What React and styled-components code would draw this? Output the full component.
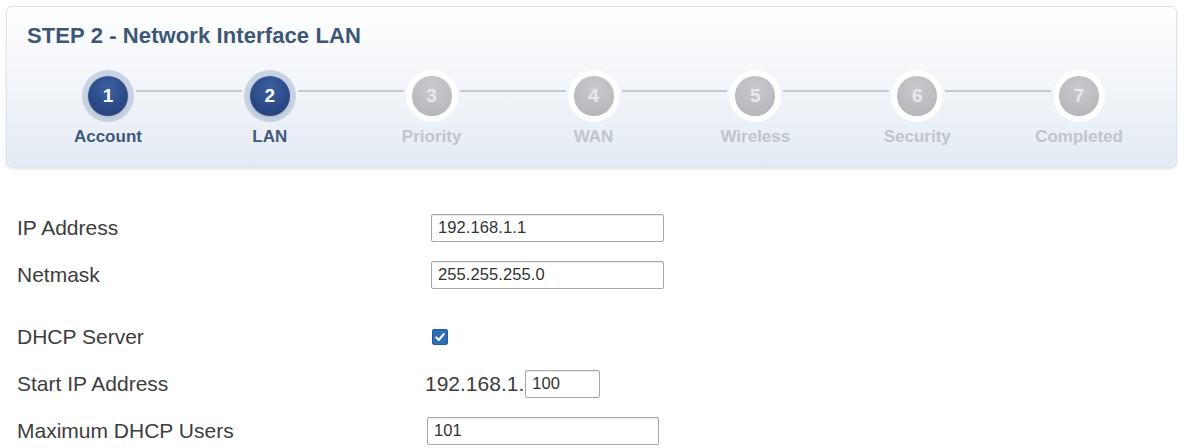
import React from 'react';
import styled, { createGlobalStyle } from 'styled-components';

const GlobalStyle = createGlobalStyle`
  html, body {
    margin: 0;
    padding: 0;
    background: #ffffff;
  }
  body {
    font-family: "Liberation Sans", Arial, sans-serif;
    color: #333333;
  }
`;

const Page = styled.div`
  width: 1184px;
  height: 448px;
  overflow: hidden;
  padding: 6px 7px 0 6px;
  box-sizing: border-box;
`;

const WizardPanel = styled.div`
  height: 162px;
  box-sizing: border-box;
  padding: 16px 12px 0 20px;
  border: 1px solid #e0e4e9;
  border-radius: 6px;
  background: linear-gradient(to bottom, #ffffff 0%, #f6f8fb 35%, #e4ebf4 100%);
  box-shadow: 0 1px 3px rgba(120, 135, 155, 0.25);
`;

const StepTitle = styled.h2`
  margin: 0;
  font-size: 22px;
  line-height: 26px;
  font-weight: bold;
  color: #3d5776;
  letter-spacing: 0.1px;
`;

const Steps = styled.div`
  display: grid;
  grid-template-columns: repeat(7, 1fr);
  margin-top: 21px;
  padding-right: 4px;
`;

const Step = styled.div`
  display: flex;
  flex-direction: column;
  align-items: center;
`;

const CircleRow = styled.div`
  display: flex;
  align-items: center;
  width: 100%;
  height: 52px;
`;

const Connector = styled.div`
  flex: 1;
  height: 2px;
  margin-bottom: 11px;
  background: ${(p) => (p.$hidden ? 'transparent' : '#c5cad0')};
`;

const Circle = styled.div`
  width: 40px;
  height: 40px;
  flex: none;
  border-radius: 50%;
  display: flex;
  align-items: center;
  justify-content: center;
  font-size: 19px;
  font-weight: bold;
  color: ${(p) => (p.$active ? '#ffffff' : '#e9e9e9')};
  background: ${(p) =>
    p.$active
      ? 'radial-gradient(circle at 50% 30%, #3c60a2 0%, #2a4986 60%, #223e75 100%)'
      : 'radial-gradient(circle at 50% 30%, #c8cacd 0%, #b9bbbe 65%, #afb2b5 100%)'};
  box-shadow: ${(p) =>
    p.$active
      ? '0 0 0 6px rgba(165, 183, 210, 0.55), 0 1px 3px rgba(0, 0, 0, 0.25)'
      : '0 0 0 6px rgba(255, 255, 255, 0.92), 0 1px 3px rgba(0, 0, 0, 0.12)'};
  margin: 0 8px;
`;

const StepLabel = styled.div`
  margin-top: 5px;
  font-size: 17px;
  line-height: 20px;
  font-weight: bold;
  color: ${(p) => (p.$active ? '#3f5a79' : '#c0c5cb')};
`;

const Form = styled.div`
  padding: 36px 0 0 11px;
`;

const Row = styled.div`
  display: grid;
  grid-template-columns: 414px 1fr;
  align-items: center;
  height: 47px;
  margin-top: ${(p) => (p.$gap ? '15px' : '0')};
`;

const FieldLabel = styled.div`
  font-size: 21px;
  color: #3d3d3d;
`;

const TextInput = styled.input`
  box-sizing: border-box;
  width: ${(p) => p.$width || '233px'};
  height: 28px;
  margin-left: ${(p) => p.$shift || '0'};
  padding: 0 6px;
  border: 1px solid #a8a8a8;
  border-radius: 2px;
  box-shadow: inset 0 1px 1px rgba(0, 0, 0, 0.08);
  font-family: "Liberation Sans", Arial, sans-serif;
  font-size: 16.5px;
  color: #333333;
  letter-spacing: 0.1px;
  background: #ffffff;
  outline: none;
`;

const Prefixed = styled.div`
  display: flex;
  align-items: center;
  margin-left: -6px;
`;

const Prefix = styled.span`
  font-size: 21px;
  color: #3d3d3d;
  margin-right: 1px;
`;

const CheckBox = styled.span`
  display: inline-flex;
  align-items: center;
  justify-content: center;
  width: 16px;
  height: 16px;
  margin-left: 1px;
  margin-top: 2px;
  border-radius: 3px;
  background: #2f6db3;
  box-shadow: inset 0 0 0 1px #265b97;
`;

const steps = [
  { n: 1, label: 'Account', active: true },
  { n: 2, label: 'LAN', active: true },
  { n: 3, label: 'Priority' },
  { n: 4, label: 'WAN' },
  { n: 5, label: 'Wireless' },
  { n: 6, label: 'Security' },
  { n: 7, label: 'Completed' },
];

export default function App() {
  return (
    <>
      <GlobalStyle />
      <Page>
        <WizardPanel>
          <StepTitle>STEP 2 - Network Interface LAN</StepTitle>
          <Steps>
            {steps.map((s, i) => (
              <Step key={s.n}>
                <CircleRow>
                  <Connector $hidden={i === 0} />
                  <Circle $active={s.active}>{s.n}</Circle>
                  <Connector $hidden={i === steps.length - 1} />
                </CircleRow>
                <StepLabel $active={s.active}>{s.label}</StepLabel>
              </Step>
            ))}
          </Steps>
        </WizardPanel>

        <Form>
          <Row>
            <FieldLabel>IP Address</FieldLabel>
            <TextInput defaultValue="192.168.1.1" />
          </Row>
          <Row>
            <FieldLabel>Netmask</FieldLabel>
            <TextInput defaultValue="255.255.255.0" />
          </Row>
          <Row $gap>
            <FieldLabel>DHCP Server</FieldLabel>
            <div>
              <CheckBox>
                <svg width="12" height="12" viewBox="0 0 12 12">
                  <path d="M2.2 6.4 L4.8 9 L9.8 3" fill="none" stroke="#fff" strokeWidth="2" strokeLinecap="round" strokeLinejoin="round" />
                </svg>
              </CheckBox>
            </div>
          </Row>
          <Row>
            <FieldLabel>Start IP Address</FieldLabel>
            <Prefixed>
              <Prefix>192.168.1.</Prefix>
              <TextInput $width="75px" defaultValue="100" />
            </Prefixed>
          </Row>
          <Row>
            <FieldLabel>Maximum DHCP Users</FieldLabel>
            <TextInput $shift="-4px" $width="232px" defaultValue="101" />
          </Row>
        </Form>
      </Page>
    </>
  );
}
